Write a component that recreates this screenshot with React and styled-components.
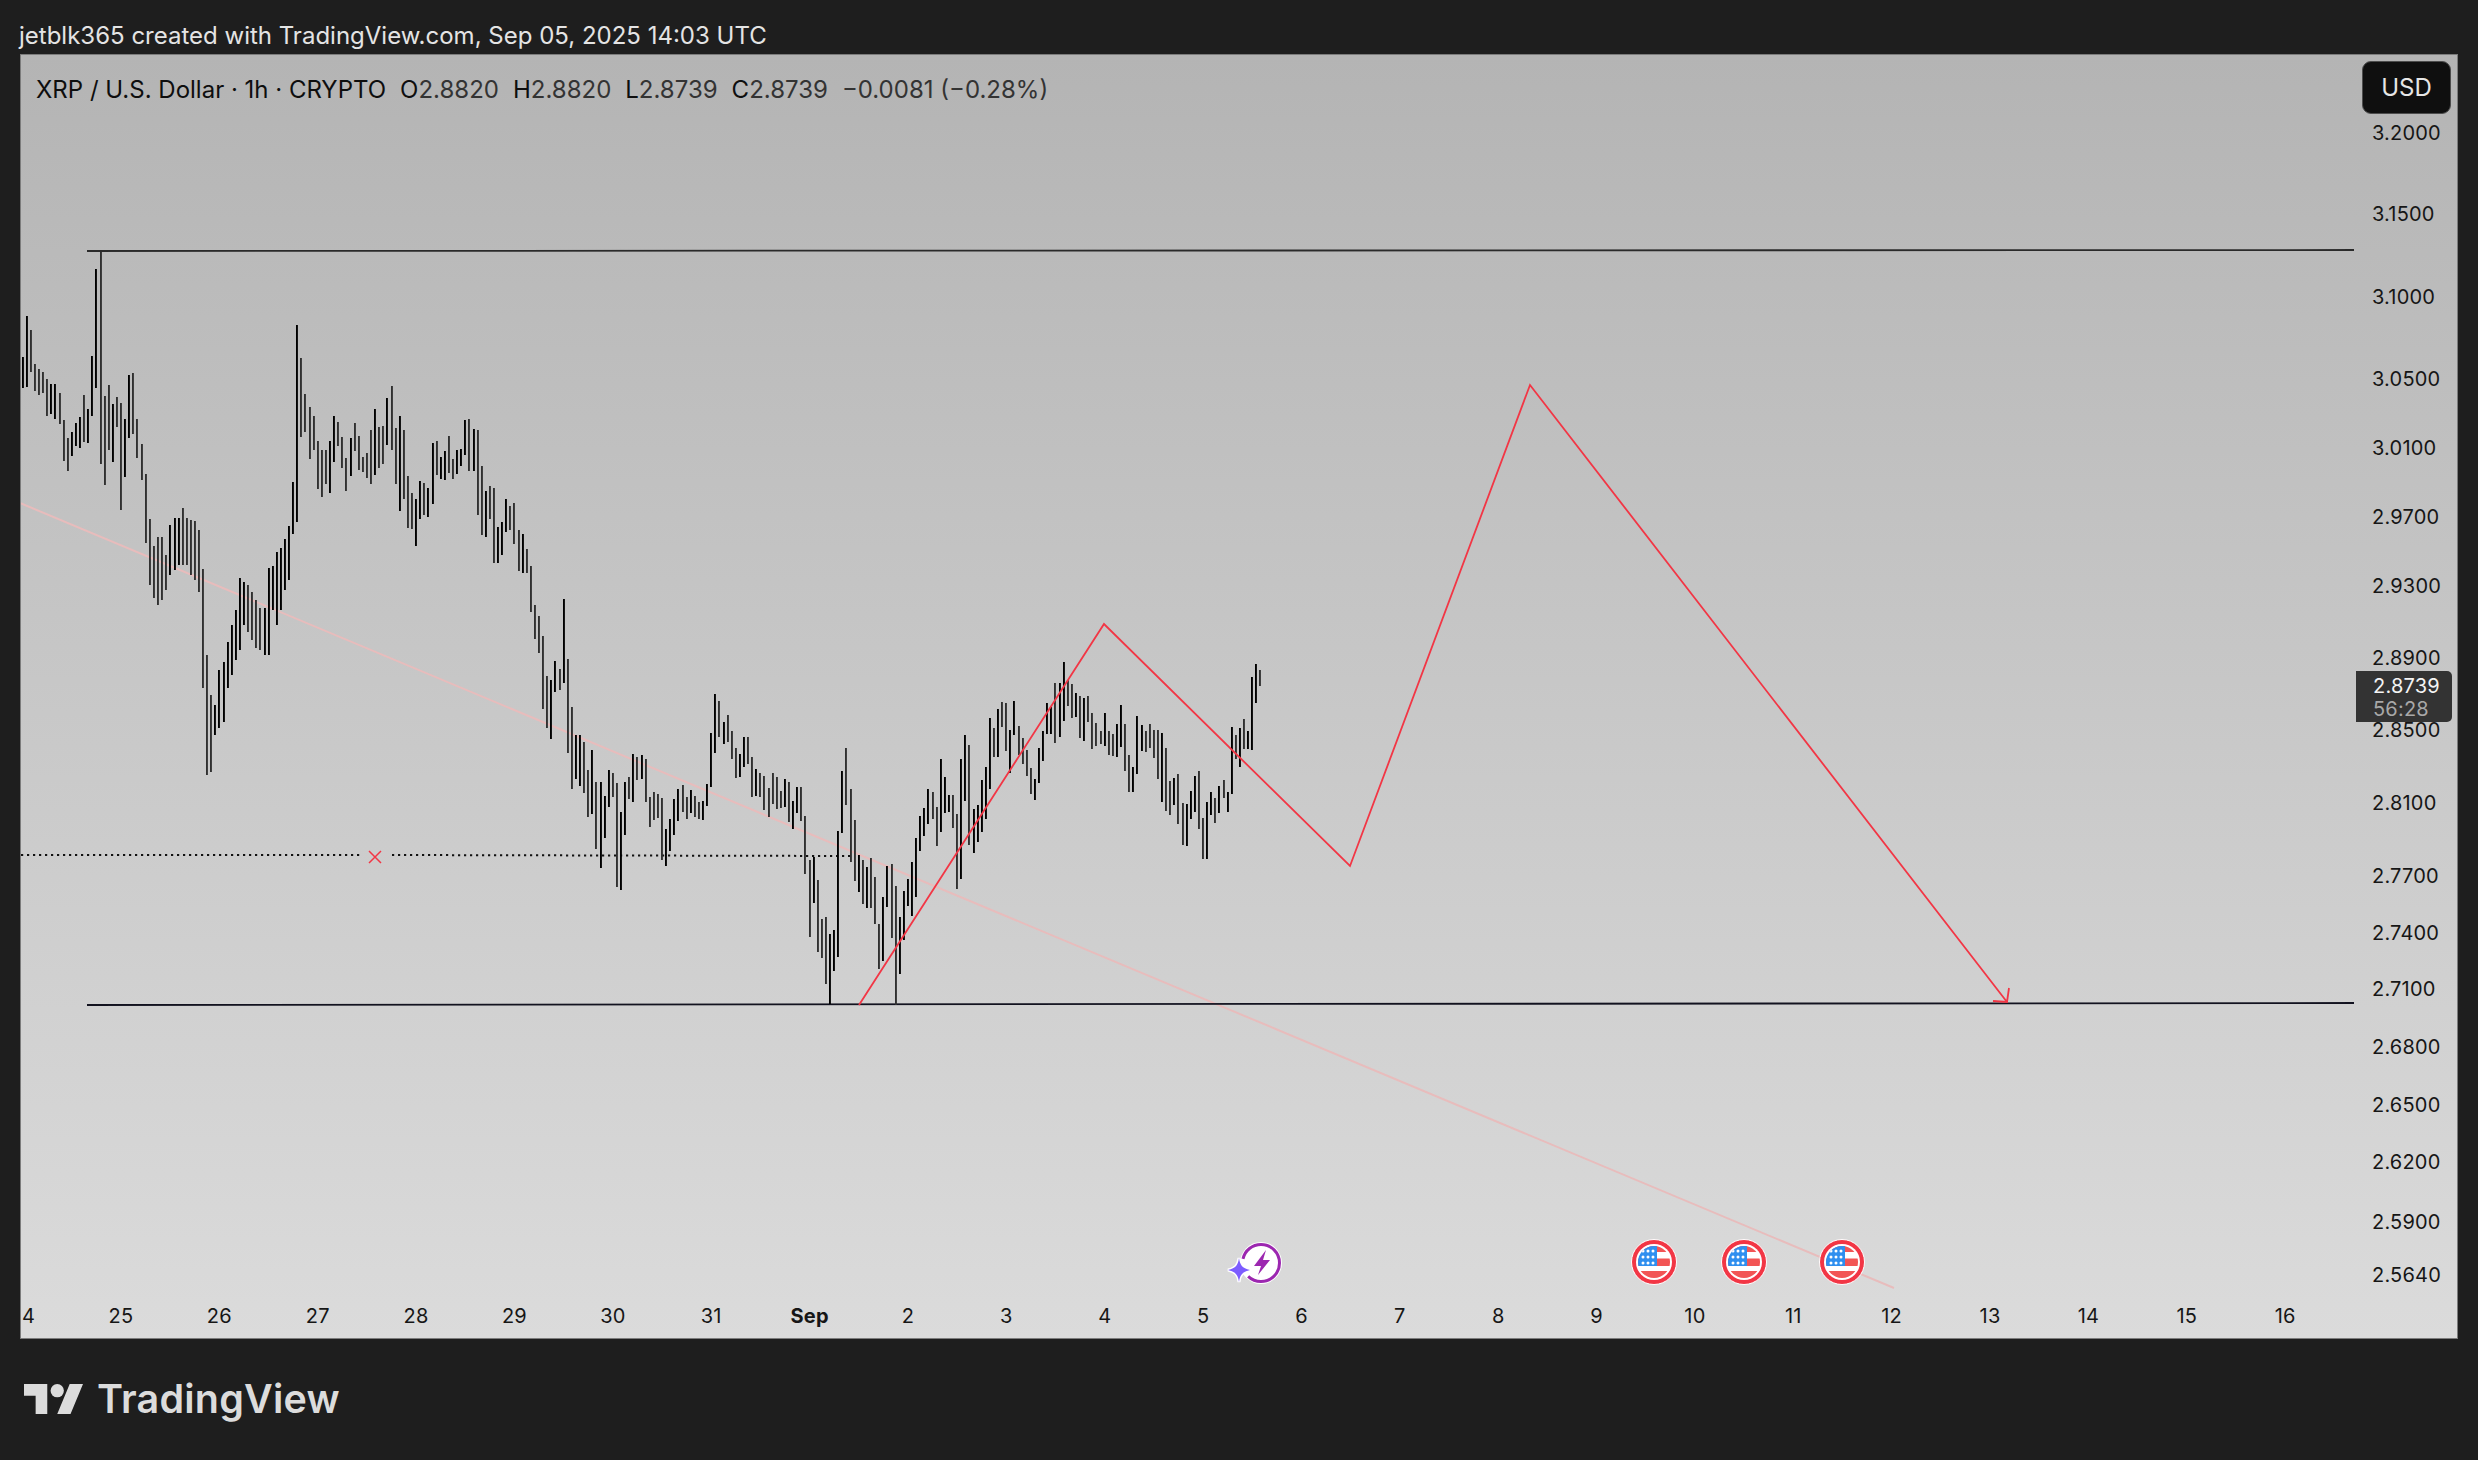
import React from "react";
import styled, { createGlobalStyle } from "styled-components";

// [x, top, bottom, up] in page pixels
const BARS = [
  [23,357,388,1],[27,316,387,1],[31,330,372,0],[35,364,391,0],[39,369,395,0],[43,372,393,0],[47,379,416,0],[51,384,414,1],
  [55,384,419,1],[60,393,424,0],[64,420,461,0],[68,438,471,0],[72,432,456,1],[76,423,446,1],[80,417,448,1],[84,395,442,0],
  [88,409,443,1],[92,356,416,1],[96,269,388,1],[101,252,464,0],[105,396,485,0],[109,385,450,0],[113,404,462,1],[117,397,427,0],
  [121,403,510,0],[125,419,477,1],[129,375,438,1],[133,373,434,0],[137,419,458,0],[142,444,480,0],[146,474,543,0],[150,519,585,0],
  [154,546,598,0],[158,537,605,0],[162,537,600,0],[166,555,590,0],[170,525,575,1],[175,518,570,1],[179,518,565,1],[183,508,565,0],
  [187,518,565,0],[191,520,575,0],[195,521,580,0],[199,530,592,0],
  [203,569,688,0],[207,655,775,0],[211,695,772,0],[215,705,735,1],[219,670,728,1],[224,662,722,1],[228,642,688,1],[232,625,675,1],
  [236,610,660,1],[240,578,650,1],[244,582,625,1],[248,585,632,0],[252,592,640,0],[256,600,648,0],[260,608,650,0],[265,608,655,1],
  [269,568,655,1],[273,566,610,1],[277,552,625,1],[281,548,610,1],
  [285,539,590,1],[289,526,580,1],[293,482,534,1],[297,325,522,1],[301,358,437,0],[305,394,432,0],[310,407,459,0],[314,416,450,0],
  [318,441,489,0],[322,450,497,0],[326,450,484,0],[330,441,493,1],[334,416,462,1],[338,422,446,0],[342,437,468,0],[346,458,491,0],
  [351,438,476,1],[355,423,451,0],[359,436,470,0],[363,457,472,0],[367,453,478,0],[371,430,484,0],[375,409,475,1],[379,427,468,0],
  [383,426,464,0],[387,398,445,1],[392,386,450,0],[396,428,484,0],[400,416,511,1],[404,430,499,0],[408,476,528,0],[412,493,529,0],
  [416,499,546,1],[420,481,519,1],[424,483,515,0],[428,488,517,1],[433,443,504,1],[437,441,475,0],[441,457,479,1],[445,451,480,1],
  [449,436,473,0],[453,459,479,0],[457,450,474,1],[461,449,466,1],[465,420,455,1],[469,419,471,0],[474,429,471,1],[478,430,515,0],
  [482,466,535,0],[486,491,537,1],[490,486,519,0],[494,488,563,0],[498,527,563,1],[502,522,555,1],[506,499,532,1],[510,506,530,0],
  [514,503,544,0],[519,530,571,0],[523,534,573,1],[527,549,573,0],[531,566,612,0],[535,605,639,0],[539,616,653,0],[543,636,709,0],
  [547,676,728,0],[551,680,739,1],[555,661,692,1],[560,669,690,0],[564,599,683,1],[568,659,753,0],[572,707,789,0],[576,735,779,1],
  [580,735,786,1],[584,742,793,0],[588,770,817,0],[592,750,814,1],[596,782,849,0],[601,782,868,1],[605,796,838,1],[609,770,807,1],
  [613,773,797,0],[617,783,887,0],[621,812,890,1],[625,782,835,1],[629,777,799,0],[633,754,802,1],[637,757,780,0],[642,755,779,1],
  [646,759,802,0],[650,797,827,0],[654,792,820,0],[658,794,818,0],[662,798,860,0],[666,829,866,1],[670,819,851,1],[674,799,835,1],
  [678,789,821,1],[683,785,812,0],[687,797,819,0],[691,790,813,1],[695,796,817,0],[699,802,819,0],[703,801,820,1],[707,784,806,1],
  [711,733,787,1],[715,694,753,1],[719,701,737,0],[724,722,744,1],[728,715,742,0],[732,731,759,0],[736,748,778,0],[740,754,777,1],
  [744,737,767,1],[748,737,764,0],[752,757,797,0],[756,769,796,1],[760,773,797,0],[764,776,810,0],[769,788,817,0],[773,773,804,0],
  [777,777,809,0],[781,791,808,0],[785,779,807,1],[789,782,822,0],[793,801,829,1],[797,787,813,1],[801,787,821,0],[805,816,874,0],
  [810,860,937,0],[814,857,903,1],[818,880,952,0],[822,919,958,0],[826,917,984,0],[830,934,1004,1],[834,930,971,1],[838,831,957,1],
  [842,771,833,1],[846,748,805,0],[851,789,862,0],[855,820,881,0],[859,855,892,1],[863,860,904,0],[867,867,908,1],[871,858,908,0],
  [875,877,924,0],[879,924,969,0],[883,897,961,1],[887,866,907,1],[892,864,938,0],[896,886,1005,0],[900,917,974,1],
  [904,891,940,1],[908,879,906,1],[912,862,916,1],[916,838,897,1],[920,816,851,1],[924,808,836,1],[928,789,824,1],[933,792,819,0],
  [937,807,846,0],[941,759,832,1],[945,777,813,1],[949,795,812,1],[953,795,828,0],[957,814,889,0],[961,759,879,1],[965,735,801,1],
  [969,745,845,0],[974,809,853,1],[978,805,842,1],[982,780,832,1],[986,767,819,1],[990,718,789,1],[994,728,757,0],[998,709,757,1],
  [1002,702,727,0],[1006,703,751,0],[1010,730,773,1],[1014,701,735,1],[1019,726,755,0],[1023,738,764,0],[1027,750,776,0],[1031,768,794,0],
  [1035,779,800,1],[1039,748,783,1],[1043,731,761,1],[1047,703,734,1],[1051,707,734,1],[1055,683,743,0],[1060,683,737,1],[1064,662,721,1],
  [1068,680,706,0],[1072,684,718,0],[1076,693,717,1],[1080,696,738,0],[1084,698,741,1],[1088,696,722,0],[1092,713,749,0],[1096,723,746,0],
  [1101,731,744,0],[1105,713,746,1],[1109,731,755,0],[1113,734,756,0],[1117,724,757,1],[1121,705,747,1],[1125,724,771,0],[1129,755,792,0],
  [1133,767,792,1],[1137,716,774,1],[1142,725,751,1],[1146,731,752,0],[1150,724,748,0],[1154,730,758,0],[1158,730,779,0],[1162,733,802,1],
  [1166,748,811,0],[1170,781,815,0],[1174,778,805,1],[1178,774,824,0],[1183,803,845,0],[1187,804,846,1],[1191,791,819,1],[1195,776,812,1],
  [1199,771,829,0],[1203,818,859,0],[1207,802,859,1],[1211,792,815,1],[1215,798,823,0],[1219,786,813,1],[1224,780,798,0],[1228,792,812,1],
  [1232,727,794,1],[1236,735,759,0],[1240,728,767,1],[1244,719,749,0],[1248,731,749,1],[1252,677,750,1],[1256,664,703,1],[1260,670,686,0],
];

const PRICES = [
  ["3.2000", 133], ["3.1500", 214], ["3.1000", 297], ["3.0500", 379], ["3.0100", 448], ["2.9700", 517],
  ["2.9300", 586], ["2.8900", 658], ["2.8500", 730], ["2.8100", 803], ["2.7700", 876], ["2.7400", 933],
  ["2.7100", 989], ["2.6800", 1047], ["2.6500", 1105], ["2.6200", 1162], ["2.5900", 1222], ["2.5640", 1275],
];

// The first day label is cut by the panel edge, only its last digit shows
const DAYS = [
  ["4", 28.5], ...["25", "26", "27", "28", "29", "30", "31", "Sep", "2", "3", "4", "5", "6", "7", "8", "9", "10", "11", "12", "13", "14", "15", "16"]
    .map((label, i) => [label, 121 + 98.37 * i]),
];

const PAGE_LEFT = 21;
const PAGE_TOP = 55;

const GlobalStyle = createGlobalStyle`
  html, body {
    margin: 0;
    background: #1e1e1e;
  }
  body {
    width: 2478px;
    height: 1460px;
    overflow: hidden;
    font-family: Inter, "Liberation Sans", sans-serif;
  }
`;

const Page = styled.div`
  display: flex;
  flex-direction: column;
  width: 2478px;
  height: 1460px;
  background: #1e1e1e;
`;

const Watermark = styled.div`
  height: 54px;
  box-sizing: border-box;
  padding: 19px 0 0 19px;
  color: #e4e4e4;
  font-size: 24px;
  line-height: 34px;
  white-space: nowrap;
`;

const ChartPanel = styled.div`
  position: relative;
  box-sizing: border-box;
  width: 2438px;
  height: 1285px;
  margin-left: 20px;
  overflow: hidden;
  border: 1px solid #7c7c7c;
  background: linear-gradient(180deg, #b4b4b4 0%, #dbdbdb 100%);
`;

const ChartSvg = styled.svg`
  display: block;
  width: 2436px;
  height: 1283px;
`;

const Legend = styled.div`
  position: absolute;
  top: 18px;
  left: 15px;
  display: flex;
  align-items: center;
  gap: 14px;
  height: 32px;
  color: #0e0e0e;
  font-size: 24px;
  white-space: nowrap;
`;

const OhlcItem = styled.span`
  color: #333;
  b {
    color: #0e0e0e;
    font-weight: 400;
  }
`;

const CurrencyButton = styled.div`
  position: absolute;
  top: 6px;
  right: 6px;
  display: flex;
  align-items: center;
  justify-content: center;
  box-sizing: border-box;
  width: 89px;
  height: 53px;
  border: 1px solid #4d4d4d;
  border-radius: 9px;
  background: #0f0f0f;
  color: #e6e6e6;
  font-size: 24px;
`;

const PriceLabel = styled.span`
  position: absolute;
  left: 2351px;
  transform: translateY(-50%);
  color: #161616;
  font-size: 20px;
  letter-spacing: 0.2px;
  line-height: 24px;
`;

const DayLabel = styled.span`
  position: absolute;
  top: 1249px;
  transform: translateX(-50%);
  color: #161616;
  font-size: 20px;
  font-weight: ${(p) => (p.$bold ? 700 : 400)};
  letter-spacing: 0.2px;
  line-height: 24px;
`;

const LastPriceTag = styled.div`
  position: absolute;
  top: 616px;
  left: 2335px;
  box-sizing: border-box;
  width: 96px;
  height: 51px;
  padding: 4px 0 0 17px;
  border-radius: 0 5px 5px 0;
  background: #333;
  color: #f4f4f4;
  font-size: 20px;
  letter-spacing: 0.2px;
  line-height: 23px;
`;

const Countdown = styled.div`
  color: #a8a8a8;
`;

const Footer = styled.div`
  display: flex;
  align-items: center;
  gap: 14px;
  padding: 38px 0 0 24px;
`;

const Wordmark = styled.span`
  color: #dcdcdc;
  font-size: 39.5px;
  font-weight: 600;
  letter-spacing: 0.2px;
  line-height: 44px;
`;

function FlagMarker({ cx, cy }) {
  return (
    <g transform={`translate(${cx} ${cy})`}>
      <circle r="22.5" fill="#f23645" stroke="#fff" strokeWidth="1" />
      <circle r="18" fill="#fff" />
      <g clipPath="url(#flagClip)">
        <rect x="-16" y="-16" width="32" height="6" fill="#f25555" />
        <rect x="-16" y="-3.5" width="32" height="7.5" fill="#f25555" />
        <rect x="-16" y="9" width="32" height="8" fill="#f25555" />
        <rect x="-16" y="-16" width="19" height="20" fill="#2f8fef" />
        {[-11, -5, 1].map((y) =>
          [-11, -6, -1].map((x) => <circle key={`${x}${y}`} cx={x} cy={y} r="1.5" fill="#fff" />)
        )}
      </g>
    </g>
  );
}

function BoltMarker({ cx, cy }) {
  return (
    <g transform={`translate(${cx} ${cy})`}>
      <circle r="21" fill="#fff" />
      <circle r="18.5" fill="none" stroke="#9c27b0" strokeWidth="3" strokeDasharray="43 19 54 0" />
      <path d="M5 -13 L-7 3 L0 3 L-3 12 L9 -3 L2 -3 Z" fill="#9c27b0" />
      <path
        d="M-22 -5 C-21 2 -19 5 -11 7 C-19 9 -21 12 -22 19 C-23 12 -25 9 -33 7 C-25 5 -23 2 -22 -5 Z"
        fill="#7c5cff"
        stroke="#fff"
        strokeWidth="3"
        paintOrder="stroke"
      />
    </g>
  );
}

export default function App() {
  return (
    <Page>
      <GlobalStyle />
      <Watermark>jetblk365 created with TradingView.com, Sep 05, 2025 14:03 UTC</Watermark>
      <ChartPanel>
        <ChartSvg viewBox={`${PAGE_LEFT} ${PAGE_TOP} 2436 1283`}>
          <defs>
            <clipPath id="flagClip">
              <circle r="16" />
            </clipPath>
          </defs>
          <line x1="20" y1="503" x2="1894" y2="1288" stroke="#e8bcbc" strokeWidth="2" />
          <line x1="21" y1="855" x2="361" y2="855" stroke="#111" strokeWidth="2" strokeDasharray="2.2 3.8" />
          <line x1="392" y1="855" x2="852" y2="856" stroke="#111" strokeWidth="2" strokeDasharray="2.2 3.8" />
          <path d="M369 851 L381 863 M381 851 L369 863" stroke="#f23645" strokeWidth="1.5" fill="none" />
          <line x1="87" y1="251" x2="2354" y2="250" stroke="#2a2a2a" strokeWidth="1.8" />
          <line x1="87" y1="1005" x2="2354" y2="1003" stroke="#12121f" strokeWidth="1.8" />
          {BARS.map(([x, top, bottom, up]) => (
            <rect key={x} x={x - 1} y={top} width="1.9" height={bottom - top} fill={up ? "#000" : "#303030"} />
          ))}
          <path
            d="M859 1005 L1104 624 L1350 866 L1530 385 L2007 1002 M1993 1001 L2007 1002 L2009 988"
            fill="none"
            stroke="#f23645"
            strokeWidth="1.8"
          />
          <BoltMarker cx={1261} cy={1263} />
          <FlagMarker cx={1654} cy={1262} />
          <FlagMarker cx={1744} cy={1262} />
          <FlagMarker cx={1842} cy={1262} />
        </ChartSvg>
        <Legend>
          <span>XRP / U.S. Dollar · 1h · CRYPTO</span>
          <OhlcItem><b>O</b>2.8820</OhlcItem>
          <OhlcItem><b>H</b>2.8820</OhlcItem>
          <OhlcItem><b>L</b>2.8739</OhlcItem>
          <OhlcItem><b>C</b>2.8739</OhlcItem>
          <OhlcItem>−0.0081 (−0.28%)</OhlcItem>
        </Legend>
        <CurrencyButton>USD</CurrencyButton>
        {PRICES.map(([label, y]) => (
          <PriceLabel key={label} style={{ top: y - PAGE_TOP }}>{label}</PriceLabel>
        ))}
        {DAYS.map(([label, x]) => (
          <DayLabel key={`${label}-${x}`} $bold={label === "Sep"} style={{ left: x - PAGE_LEFT }}>
            {label}
          </DayLabel>
        ))}
        <LastPriceTag>
          2.8739
          <Countdown>56:28</Countdown>
        </LastPriceTag>
      </ChartPanel>
      <Footer>
        <svg width="59" height="30" viewBox="0 4 35.5 18" fill="#dcdcdc">
          <path d="M14 22H7V11H0V4h14v18ZM28 22h-8l7.5-18h8L28 22Z" />
          <circle cx="20" cy="8" r="4" />
        </svg>
        <Wordmark>TradingView</Wordmark>
      </Footer>
    </Page>
  );
}
